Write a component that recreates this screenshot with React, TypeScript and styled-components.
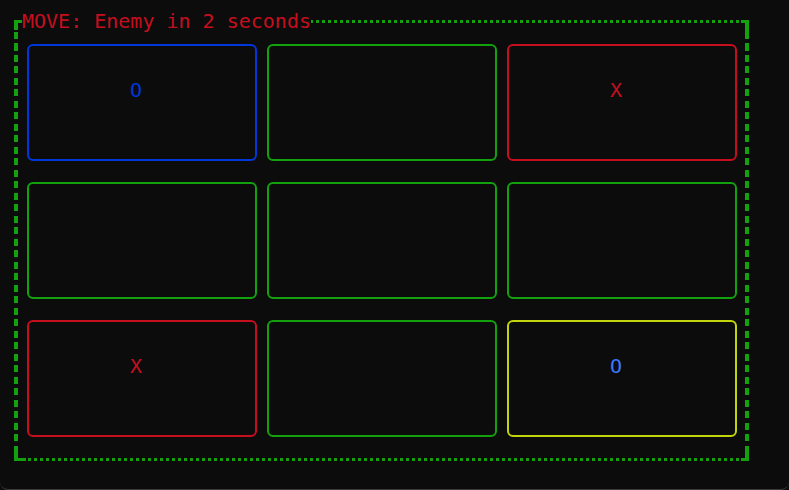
import React from "react";
import styled, { createGlobalStyle } from "styled-components";

const GREEN = "#13a10e";

const colors = {
  green: "#13a10e",
  red: "#c50f1f",
  blue: "#0037da",
  brightBlue: "#3b78ff",
  lime: "#c2d40c",
};

type Cell = {
  mark?: "X" | "O";
  border: string;
  ink?: string;
};

const cells: Cell[] = [
  { mark: "O", border: colors.blue, ink: colors.blue },
  { border: colors.green },
  { mark: "X", border: colors.red, ink: colors.red },
  { border: colors.green },
  { border: colors.green },
  { border: colors.green },
  { mark: "X", border: colors.red, ink: colors.red },
  { border: colors.green },
  { mark: "O", border: colors.lime, ink: colors.brightBlue },
];

const GlobalStyle = createGlobalStyle`
  html, body {
    margin: 0;
    padding: 0;
    background: #0c0c0c;
  }
  body {
    font-family: "DejaVu Sans Mono", "Liberation Mono", monospace;
  }
`;

const Window = styled.div`
  box-sizing: border-box;
  width: 789px;
  height: 490px;
  background: #0c0c0c;
  border-bottom: 1px solid #3a3a3a;
  border-radius: 0 0 8px 8px;
  padding: 20px 0 0 14px;
`;

const dots = `repeating-linear-gradient(to right, ${GREEN} 0 3px, transparent 3px 6px)`;
const dashes = `repeating-linear-gradient(to bottom, ${GREEN} 0 7px, transparent 7px 11.5px)`;
const solid = `linear-gradient(${GREEN}, ${GREEN})`;

const Board = styled.div`
  position: relative;
  box-sizing: border-box;
  width: 735px;
  height: 441px;
  padding: 24px 0 0 13px;
  display: grid;
  grid-template-columns: repeat(3, 230px);
  grid-template-rows: repeat(3, 117px);
  column-gap: 10px;
  row-gap: 21px;
  background:
    ${solid} left top / 10px 3px no-repeat,
    ${solid} left top / 4px 10px no-repeat,
    ${solid} right top / 8px 3px no-repeat,
    ${solid} right top / 4px 12px no-repeat,
    ${solid} left bottom / 12px 3px no-repeat,
    ${solid} left bottom / 4px 8px no-repeat,
    ${solid} right bottom / 8px 3px no-repeat,
    ${solid} right bottom / 4px 8px no-repeat,
    ${dots} 8px top / calc(100% - 16px) 3px no-repeat,
    ${dots} 14px bottom / calc(100% - 22px) 3px no-repeat,
    ${dashes} left 12px / 4px calc(100% - 20px) no-repeat,
    ${dashes} right 12px / 4px calc(100% - 20px) no-repeat;
`;

const Title = styled.div`
  position: absolute;
  top: -10px;
  left: 8px;
  background: #0c0c0c;
  color: ${colors.red};
  font-size: 20px;
  line-height: 23px;
  white-space: pre;
`;

const Tile = styled.div<{ $border: string; $ink?: string }>`
  box-sizing: border-box;
  border: 2px solid ${(p) => p.$border};
  border-radius: 6px;
  display: flex;
  justify-content: center;
  align-items: flex-start;
  padding: 33px 12px 0 0;
  color: ${(p) => p.$ink ?? p.$border};
  font-size: 20px;
  line-height: 23px;
`;

export default function App() {
  return (
    <>
      <GlobalStyle />
      <Window>
        <Board>
          <Title>MOVE: Enemy in 2 seconds</Title>
          {cells.map((c, i) => (
            <Tile key={i} $border={c.border} $ink={c.ink}>
              {c.mark}
            </Tile>
          ))}
        </Board>
      </Window>
    </>
  );
}
